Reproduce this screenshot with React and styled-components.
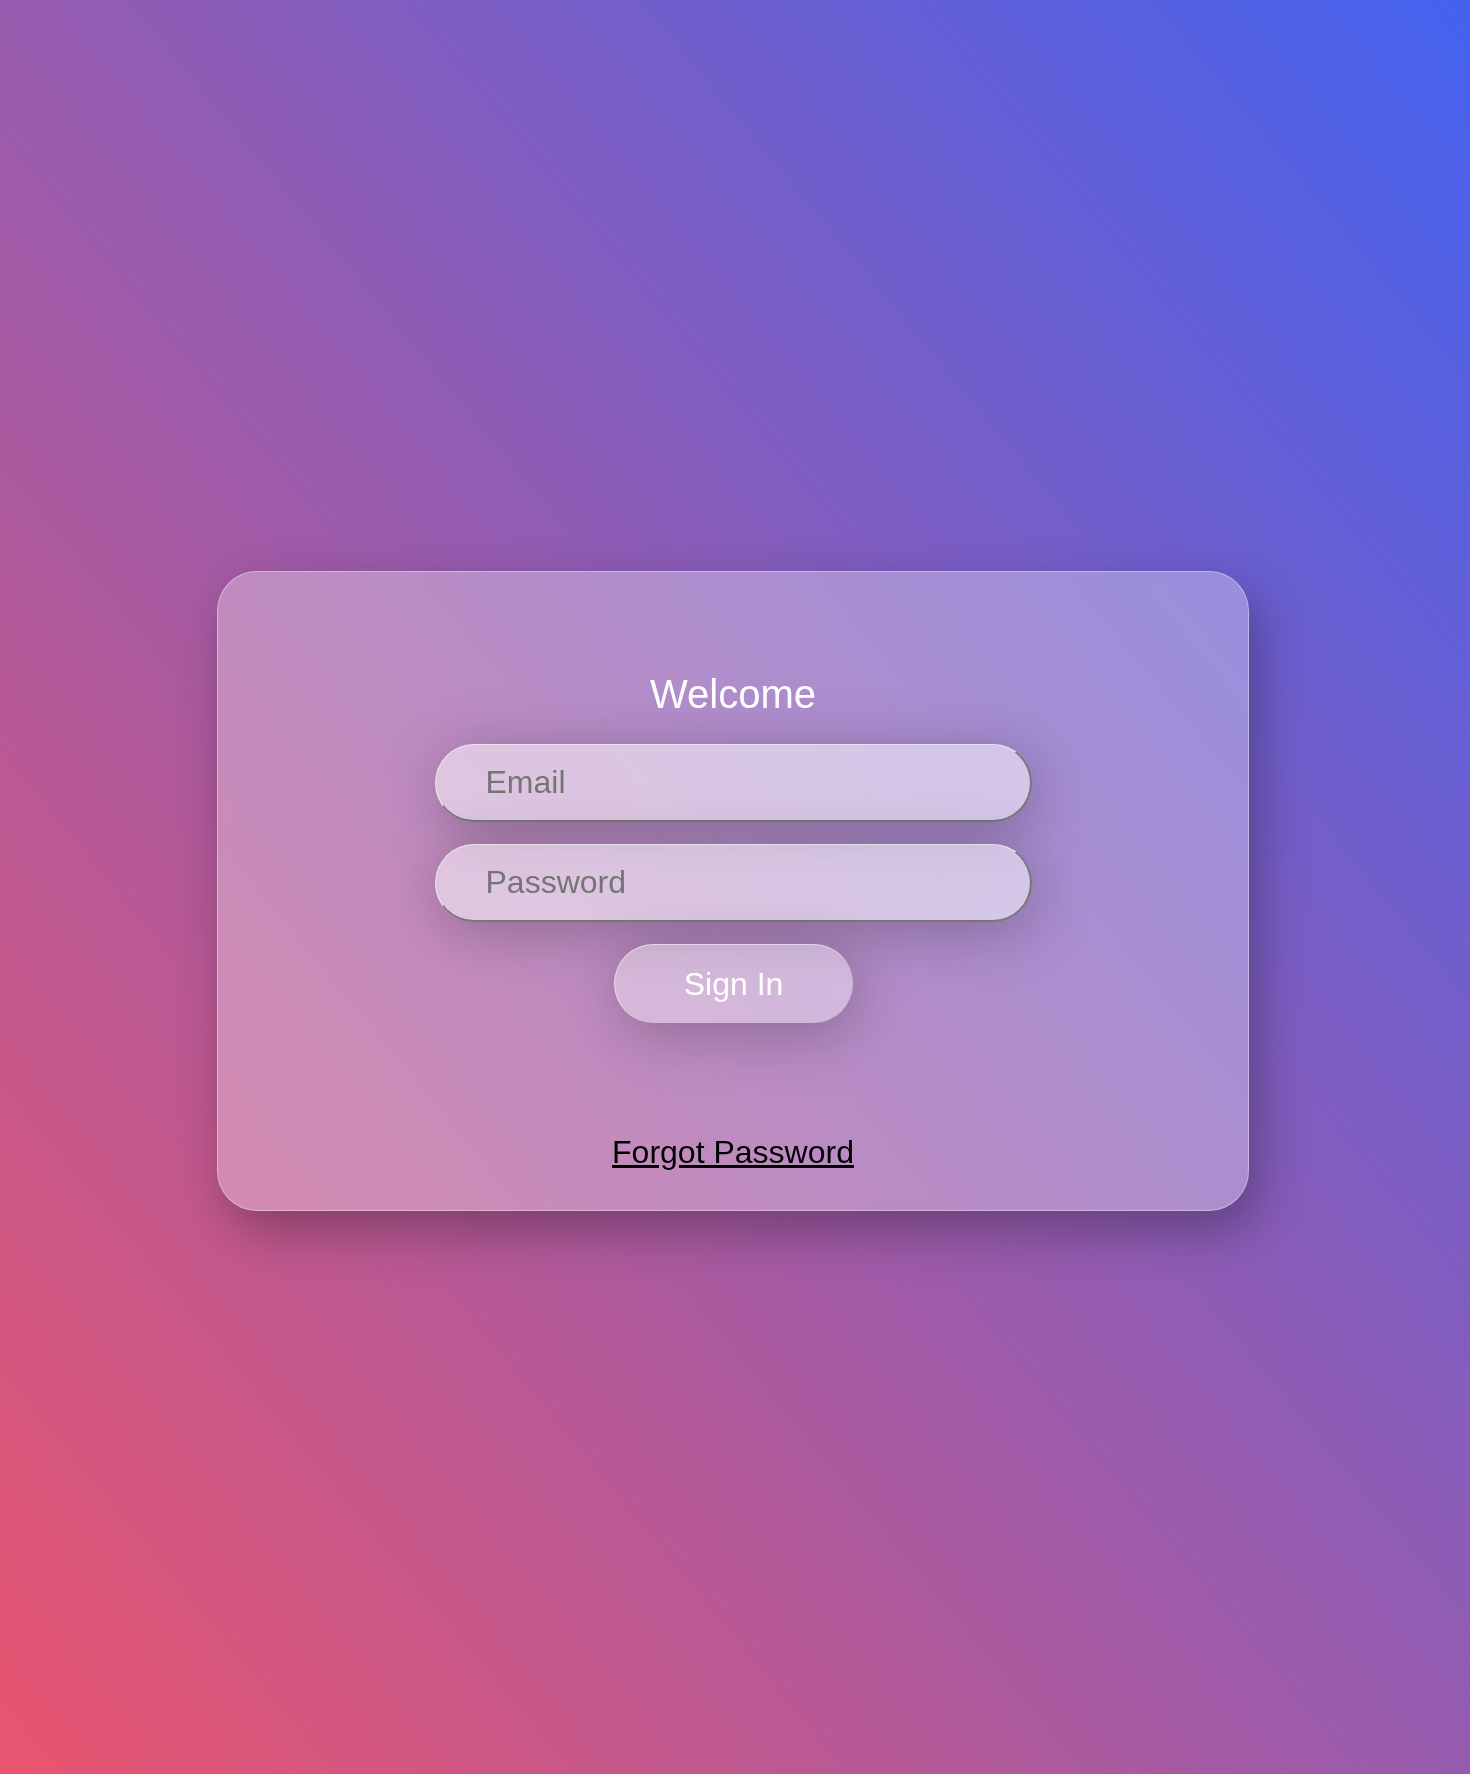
import React from "react";
import styled, { createGlobalStyle } from "styled-components";

const GlobalStyle = createGlobalStyle`
  html, body {
    margin: 0;
    padding: 0;
  }
  body {
    font-family: "Liberation Sans", Arial, Helvetica, sans-serif;
  }
`;

const Page = styled.div`
  min-height: 100vh;
  box-sizing: border-box;
  padding: 8px 4px 0 0;
  display: flex;
  justify-content: center;
  align-items: center;
  background: linear-gradient(to top right, #e9556f, #4462ef);
`;

const Card = styled.div`
  width: 1032px;
  height: 640px;
  box-sizing: border-box;
  padding-top: 99px;
  display: flex;
  flex-direction: column;
  align-items: center;
  background: rgba(255, 255, 255, 0.3);
  border: 1px solid rgba(255, 255, 255, 0.35);
  border-radius: 40px;
  backdrop-filter: blur(6px);
  box-shadow: 10px 20px 50px rgba(0, 0, 0, 0.3);
`;

const Title = styled.h1`
  margin: 0 0 27px;
  font-size: 40px;
  font-weight: normal;
  line-height: 46px;
  color: #fff;
`;

const Form = styled.form`
  display: flex;
  flex-direction: column;
  align-items: center;
  gap: 22px;
`;

const Input = styled.input`
  width: 597px;
  height: 78px;
  box-sizing: border-box;
  padding: 0 50px;
  font-family: inherit;
  font-size: 32px;
  color: #333;
  background: rgba(255, 255, 255, 0.5);
  border-radius: 40px;
  border-top: 1px solid rgba(255, 255, 255, 0.5);
  border-left: 1px solid rgba(255, 255, 255, 0.5);
  border-right: 2px solid #767676;
  border-bottom: 2px solid #767676;
  outline: none;
  box-shadow: 4px 10px 60px rgba(0, 0, 0, 0.25);

  &::placeholder {
    color: #757575;
  }
`;

const Button = styled.button`
  width: 239px;
  height: 79px;
  font-family: inherit;
  font-size: 32px;
  color: #fff;
  background: rgba(255, 255, 255, 0.38);
  border: none;
  border-top: 1px solid rgba(255, 255, 255, 0.5);
  border-left: 1px solid rgba(255, 255, 255, 0.5);
  border-radius: 40px;
  box-shadow: 4px 10px 60px rgba(0, 0, 0, 0.25);
  cursor: pointer;
`;

const Forgot = styled.a`
  margin-top: 111px;
  font-size: 32px;
  line-height: 37px;
  color: #000;
  text-decoration: underline;
`;

const App = () => {
  return (
    <>
      <GlobalStyle />
      <Page>
        <Card>
          <Title>Welcome</Title>
          <Form onSubmit={(e) => e.preventDefault()}>
            <Input type="email" placeholder="Email" />
            <Input type="password" placeholder="Password" />
            <Button type="submit">Sign In</Button>
          </Form>
          <Forgot href="#">Forgot Password</Forgot>
        </Card>
      </Page>
    </>
  );
};

export default App;
